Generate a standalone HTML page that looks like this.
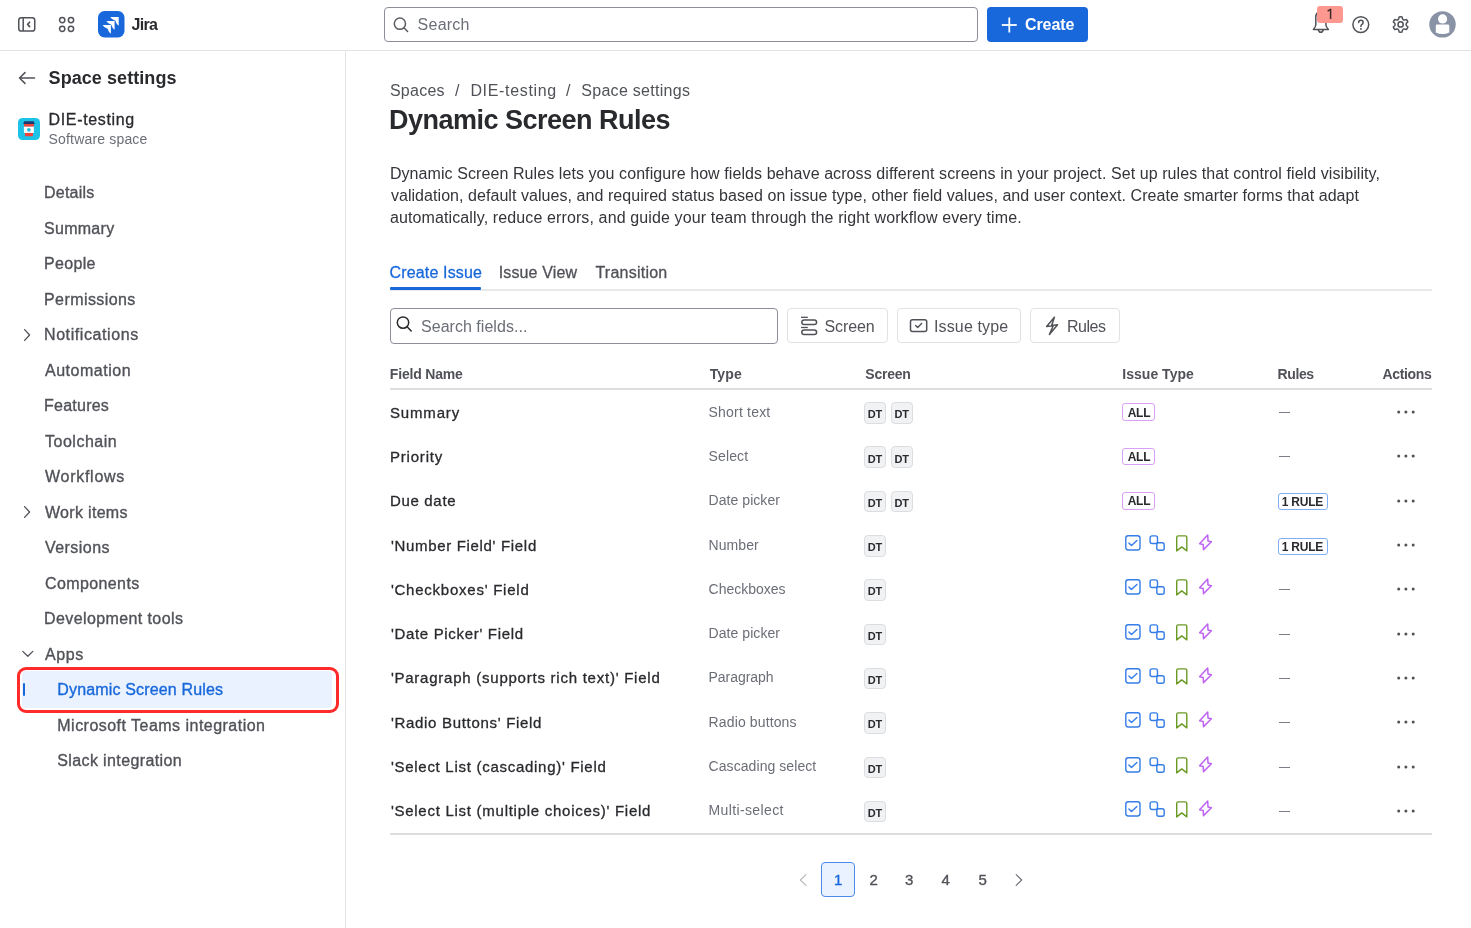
<!DOCTYPE html>
<html><head><meta charset="utf-8"><title>Dynamic Screen Rules - Space settings</title>
<style>
html,body{margin:0;padding:0;background:#fff;}
body{width:1471px;height:928px;position:relative;overflow:hidden;font-family:"Liberation Sans",sans-serif;}
.t{position:absolute;white-space:pre;font-family:"Liberation Sans",sans-serif;}
svg{display:block}
</style></head><body>
<div style="position:absolute;left:0;top:50px;width:1471px;height:1px;background:#E3E3E3"></div>
<svg style="position:absolute;left:16px;top:15px" width="22" height="20" viewBox="0 0 22 20">
<rect x="2.75" y="2.75" width="16" height="13.3" rx="2.6" fill="none" stroke="#505258" stroke-width="1.5"/>
<line x1="7.2" y1="2.75" x2="7.2" y2="16" stroke="#505258" stroke-width="1.5"/>
<path d="M13.6 7.2 L11.6 9.4 L13.6 11.6" fill="none" stroke="#505258" stroke-width="1.6" stroke-linecap="round" stroke-linejoin="round"/>
</svg>
<svg style="position:absolute;left:56px;top:15px" width="20" height="20" viewBox="0 0 20 20">
<g fill="none" stroke="#505258" stroke-width="1.5">
<circle cx="6.2" cy="5.1" r="2.65"/><circle cx="15" cy="5.1" r="2.65"/>
<circle cx="6.2" cy="13.8" r="2.65"/><circle cx="15" cy="13.8" r="2.65"/>
</g></svg>
<svg style="position:absolute;left:98px;top:11px" width="26.5" height="26.5" viewBox="0 0 26.5 26.5">
<rect x="0" y="0" width="26.5" height="26.5" rx="6.5" fill="#1868DB"/>
<g fill="#fff">
<path d="M12.2 6 L20.7 6 L20.7 14.7 Q18.6 13.8 17.4 9.7 Q13.6 8.5 12.2 6 Z"/>
<path d="M8.3 10 L16.6 10 L16.6 18.7 Q14.5 17.8 13.3 13.7 Q9.6 12.5 8.3 10 Z"/>
<path d="M4.5 14.1 L12.9 14.1 L12.9 22.8 Q10.8 21.9 9.6 17.8 Q5.8 16.6 4.5 14.1 Z"/>
</g></svg>
<div style="position:absolute;left:383.5px;top:7px;width:594.5px;height:35px;box-sizing:border-box;border:1px solid #8C8F97;border-radius:4px;background:#fff"></div>
<svg style="position:absolute;left:391px;top:15px" width="20" height="20" viewBox="0 0 20 20">
<circle cx="8.9" cy="8.7" r="5.6" fill="none" stroke="#5A5C62" stroke-width="1.5"/>
<line x1="12.9" y1="12.8" x2="16.6" y2="16.5" stroke="#5A5C62" stroke-width="1.5" stroke-linecap="round"/>
</svg>
<div style="position:absolute;left:987px;top:7px;width:101px;height:35px;border-radius:4px;background:#1868DB"></div>
<svg style="position:absolute;left:999px;top:15px" width="20" height="20" viewBox="0 0 20 20">
<line x1="10.3" y1="2.5" x2="10.3" y2="17.5" stroke="#fff" stroke-width="1.8"/>
<line x1="2.8" y1="10" x2="17.8" y2="10" stroke="#fff" stroke-width="1.8"/>
</svg>
<svg style="position:absolute;left:1310px;top:4px" width="22" height="32" viewBox="0 0 22 32">
<path d="M5.8 21 L5.8 13.5 Q5.8 7.5 10.9 7.5 Q15.9 7.5 15.9 13.5 L15.9 21 Q16.2 23 18.4 25.4 L3.4 25.4 Q5.5 23 5.8 21 Z" fill="none" stroke="#505258" stroke-width="1.5" stroke-linejoin="round"/>
<path d="M8.1 26 Q10.8 30.6 13.5 26" fill="none" stroke="#505258" stroke-width="1.5"/>
</svg>
<div style="position:absolute;left:1317px;top:6px;width:26px;height:17px;border-radius:3px;background:#FD9891"></div>
<svg style="position:absolute;left:1322px;top:6px" width="14" height="17" viewBox="0 0 14 17"><path d="M5.6 5.2 L8.6 3.3 L8.6 13" fill="none" stroke="#3B2B2B" stroke-width="1.5" stroke-linejoin="round"/></svg>
<svg style="position:absolute;left:1350px;top:14px" width="22" height="22" viewBox="0 0 22 22">
<circle cx="10.8" cy="10.6" r="7.9" fill="none" stroke="#505258" stroke-width="1.5"/>
<path d="M8.6 8.6 Q8.6 6.3 10.9 6.3 Q13.1 6.3 13.1 8.4 Q13.1 9.8 11.6 10.6 Q10.9 11 10.9 12.4" fill="none" stroke="#505258" stroke-width="1.5" stroke-linecap="round"/>
<circle cx="10.9" cy="14.9" r="0.95" fill="#505258"/>
</svg>
<svg style="position:absolute;left:1390px;top:14px" width="22" height="22" viewBox="0 0 22 22">
<path d="M12.07 2.89 A7.7 7.7 0 0 0 9.13 2.89 Q8.80 7.33 4.79 5.40 A7.7 7.7 0 0 0 3.32 7.94 Q7.00 10.45 3.32 12.96 A7.7 7.7 0 0 0 4.79 15.50 Q8.80 13.57 9.13 18.01 A7.7 7.7 0 0 0 12.07 18.01 Q12.40 13.57 16.41 15.50 A7.7 7.7 0 0 0 17.88 12.96 Q14.20 10.45 17.88 7.94 A7.7 7.7 0 0 0 16.41 5.40 Q12.40 7.33 12.07 2.89 Z" fill="none" stroke="#505258" stroke-width="1.5" stroke-linejoin="round"/>
<circle cx="10.6" cy="10.45" r="2.6" fill="none" stroke="#505258" stroke-width="1.5"/>
</svg>
<svg style="position:absolute;left:1429px;top:11px" width="27" height="27" viewBox="0 0 27 27">
<circle cx="13.5" cy="13.4" r="13.2" fill="#8993A5"/>
<circle cx="13.6" cy="7.9" r="4.6" fill="#fff"/>
<path d="M6.8 14.8 Q6.8 13.4 8.2 13.4 L18.9 13.4 Q20.3 13.4 20.3 14.8 L20.3 21.6 Q13.6 24.6 6.8 21.6 Z" fill="#fff"/>
</svg>
<div style="position:absolute;left:345px;top:51px;width:1px;height:877px;background:#E3E4E4"></div>
<svg style="position:absolute;left:17px;top:70px" width="20" height="16" viewBox="0 0 20 16">
<path d="M2.5 8 L17.5 8 M8 2.6 L2.5 8 L8 13.4" fill="none" stroke="#505258" stroke-width="1.5" stroke-linecap="round" stroke-linejoin="round"/>
</svg>
<svg style="position:absolute;left:18px;top:118px" width="22" height="22" viewBox="0 0 22 22">
<rect x="0" y="0" width="22" height="22" rx="4.5" fill="#1CC3E6"/>
<path d="M6.3 3.3 L15.6 3.3 L16.8 5.9 L5.1 5.9 Z" fill="#1D3A6E"/>
<rect x="6.1" y="6.0" width="9.8" height="2.7" fill="#F0443A"/>
<rect x="5.9" y="8.7" width="10" height="6.2" fill="#fff"/>
<circle cx="10.9" cy="11.8" r="1.9" fill="#1CC3E6"/>
<path d="M6.8 14.9 L15.1 14.9 L14.7 18.2 L7.2 18.2 Z" fill="#F0443A"/>
</svg>
<svg style="position:absolute;left:20px;top:326.6px" width="14" height="16" viewBox="0 0 14 16">
<path d="M4.6 2.6 L9.6 8 L4.6 13.4" fill="none" stroke="#505258" stroke-width="1.3" stroke-linecap="round" stroke-linejoin="round"/></svg>
<svg style="position:absolute;left:20px;top:504.1px" width="14" height="16" viewBox="0 0 14 16">
<path d="M4.6 2.6 L9.6 8 L4.6 13.4" fill="none" stroke="#505258" stroke-width="1.3" stroke-linecap="round" stroke-linejoin="round"/></svg>
<svg style="position:absolute;left:20px;top:646.1px" width="16" height="16" viewBox="0 0 16 16">
<path d="M2.8 5.4 L7.8 10.2 L12.8 5.4" fill="none" stroke="#505258" stroke-width="1.3" stroke-linecap="round" stroke-linejoin="round"/></svg>
<div style="position:absolute;left:21.5px;top:671px;width:310.5px;height:36.5px;border-radius:4px;background:#E9F2FE"></div>
<div style="position:absolute;left:22.5px;top:682.5px;width:2.3px;height:13px;border-radius:1.2px;background:#1868DB"></div>
<div style="position:absolute;left:17px;top:667px;width:321.5px;height:45.5px;box-sizing:border-box;border:3px solid #FF2A2A;border-radius:9px"></div>
<div style="position:absolute;left:390px;top:289px;width:1041.5px;height:2px;background:#E9E9E9"></div>
<div style="position:absolute;left:390px;top:287px;width:91px;height:3px;border-radius:1px;background:#1868DB"></div>
<div style="position:absolute;left:390px;top:308px;width:388px;height:36px;box-sizing:border-box;border:1px solid #8C8F97;border-radius:4px;background:#fff"></div>
<svg style="position:absolute;left:394px;top:314px" width="20" height="20" viewBox="0 0 20 20">
<circle cx="9" cy="8.6" r="5.7" fill="none" stroke="#292A2E" stroke-width="1.5"/>
<line x1="13.1" y1="12.7" x2="17.2" y2="16.9" stroke="#292A2E" stroke-width="1.5" stroke-linecap="round"/>
</svg>
<div style="position:absolute;left:787px;top:308px;width:101px;height:35px;box-sizing:border-box;border:1px solid #E1E2E5;border-radius:4px;background:#fff"></div>
<div style="position:absolute;left:896.5px;top:308px;width:124.0px;height:35px;box-sizing:border-box;border:1px solid #E1E2E5;border-radius:4px;background:#fff"></div>
<div style="position:absolute;left:1029.5px;top:308px;width:90.5px;height:35px;box-sizing:border-box;border:1px solid #E1E2E5;border-radius:4px;background:#fff"></div>
<svg style="position:absolute;left:799px;top:315px" width="20" height="22" viewBox="0 0 20 22">
<g fill="none" stroke="#505258" stroke-width="1.5">
<rect x="2.8" y="4.9" width="14.8" height="4.6" rx="2.3"/>
<rect x="2.8" y="15" width="14.8" height="4.6" rx="2.3"/>
</g>
<line x1="2" y1="2.3" x2="8.8" y2="2.3" stroke="#505258" stroke-width="1.3"/>
<line x1="2" y1="12.5" x2="8.8" y2="12.5" stroke="#505258" stroke-width="1.3"/>
</svg>
<svg style="position:absolute;left:908px;top:316px" width="22" height="20" viewBox="0 0 22 20">
<rect x="2.5" y="3.7" width="16.2" height="11.8" rx="2" fill="none" stroke="#505258" stroke-width="1.5"/>
<path d="M7.6 9.6 L9.7 11.6 L13.6 7.6" fill="none" stroke="#505258" stroke-width="1.4" stroke-linecap="round" stroke-linejoin="round"/>
</svg>
<svg style="position:absolute;left:1042px;top:315px" width="20" height="22" viewBox="0 0 20 22">
<path d="M12.4 2.3 L4.6 11.5 L11.2 10.8 L7.4 19.6 L15.6 9.8 L9.6 10.4 Z" fill="none" stroke="#505258" stroke-width="1.5" stroke-linejoin="round"/>
</svg>
<div style="position:absolute;left:390px;top:388px;width:1041.5px;height:2px;background:#DDDDDD"></div>
<div style="position:absolute;left:390px;top:833px;width:1041.5px;height:2px;background:#DDDDDD"></div>
<div style="position:absolute;left:864.3px;top:402.1px;width:22px;height:21.5px;box-sizing:border-box;border:1px solid #DCDDE0;border-radius:4px;background:#F1F2F4"></div>
<div style="position:absolute;left:891.2px;top:402.1px;width:22px;height:21.5px;box-sizing:border-box;border:1px solid #DCDDE0;border-radius:4px;background:#F1F2F4"></div>
<div style="position:absolute;left:1122.4px;top:403.2px;width:32.2px;height:17.7px;box-sizing:border-box;border:1px solid #D8A0F7;border-radius:3px;background:#fff"></div>
<div style="position:absolute;left:1278.5px;top:412px;width:11px;height:1px;background:#7A7D85"></div>
<svg style="position:absolute;left:1394px;top:409.1px" width="24" height="6" viewBox="0 0 24 6">
<circle cx="4.7" cy="3" r="1.5" fill="#505258"/><circle cx="11.9" cy="3" r="1.5" fill="#505258"/><circle cx="19.2" cy="3" r="1.5" fill="#505258"/></svg>
<div style="position:absolute;left:864.3px;top:446.4px;width:22px;height:21.5px;box-sizing:border-box;border:1px solid #DCDDE0;border-radius:4px;background:#F1F2F4"></div>
<div style="position:absolute;left:891.2px;top:446.4px;width:22px;height:21.5px;box-sizing:border-box;border:1px solid #DCDDE0;border-radius:4px;background:#F1F2F4"></div>
<div style="position:absolute;left:1122.4px;top:447.6px;width:32.2px;height:17.7px;box-sizing:border-box;border:1px solid #D8A0F7;border-radius:3px;background:#fff"></div>
<div style="position:absolute;left:1278.5px;top:456px;width:11px;height:1px;background:#7A7D85"></div>
<svg style="position:absolute;left:1394px;top:453.4px" width="24" height="6" viewBox="0 0 24 6">
<circle cx="4.7" cy="3" r="1.5" fill="#505258"/><circle cx="11.9" cy="3" r="1.5" fill="#505258"/><circle cx="19.2" cy="3" r="1.5" fill="#505258"/></svg>
<div style="position:absolute;left:864.3px;top:490.8px;width:22px;height:21.5px;box-sizing:border-box;border:1px solid #DCDDE0;border-radius:4px;background:#F1F2F4"></div>
<div style="position:absolute;left:891.2px;top:490.8px;width:22px;height:21.5px;box-sizing:border-box;border:1px solid #DCDDE0;border-radius:4px;background:#F1F2F4"></div>
<div style="position:absolute;left:1122.4px;top:491.9px;width:32.2px;height:17.7px;box-sizing:border-box;border:1px solid #D8A0F7;border-radius:3px;background:#fff"></div>
<div style="position:absolute;left:1277.9px;top:493.2px;width:50.5px;height:17.2px;box-sizing:border-box;border:1px solid #7EAEF5;border-radius:3px;background:#fff"></div>
<svg style="position:absolute;left:1394px;top:497.8px" width="24" height="6" viewBox="0 0 24 6">
<circle cx="4.7" cy="3" r="1.5" fill="#505258"/><circle cx="11.9" cy="3" r="1.5" fill="#505258"/><circle cx="19.2" cy="3" r="1.5" fill="#505258"/></svg>
<div style="position:absolute;left:864.3px;top:535.0px;width:22px;height:21.5px;box-sizing:border-box;border:1px solid #DCDDE0;border-radius:4px;background:#F1F2F4"></div>
<svg style="position:absolute;left:1120px;top:531.0px" width="100" height="24" viewBox="0 0 100 24">
<rect x="5.8" y="4.8" width="14.2" height="14.2" rx="2.4" fill="none" stroke="#357DE8" stroke-width="1.4"/>
<path d="M8.9 12 L11.5 14.6 L16.9 9.4" fill="none" stroke="#357DE8" stroke-width="1.4" stroke-linecap="round" stroke-linejoin="round"/>
<rect x="30.1" y="4.9" width="7.4" height="7.6" rx="2" fill="none" stroke="#357DE8" stroke-width="1.4"/>
<rect x="36.8" y="11.7" width="7.4" height="7.6" rx="2" fill="none" stroke="#357DE8" stroke-width="1.4"/>
<path d="M56.7 19.9 L56.7 6.4 Q56.7 4.9 58.2 4.9 L65.3 4.9 Q66.8 4.9 66.8 6.4 L66.8 19.9 L61.75 15.9 Z" fill="none" stroke="#6A9A23" stroke-width="1.4" stroke-linejoin="round"/>
<path d="M87.7 4 L88 10 L91.4 10.8 L83.5 18.6 L83.2 13.6 L79.6 12.7 Z" fill="none" stroke="#BF63F3" stroke-width="1.5" stroke-linejoin="round"/>
</svg>
<div style="position:absolute;left:1277.9px;top:537.5px;width:50.5px;height:17.2px;box-sizing:border-box;border:1px solid #7EAEF5;border-radius:3px;background:#fff"></div>
<svg style="position:absolute;left:1394px;top:542.0px" width="24" height="6" viewBox="0 0 24 6">
<circle cx="4.7" cy="3" r="1.5" fill="#505258"/><circle cx="11.9" cy="3" r="1.5" fill="#505258"/><circle cx="19.2" cy="3" r="1.5" fill="#505258"/></svg>
<div style="position:absolute;left:864.3px;top:579.3px;width:22px;height:21.5px;box-sizing:border-box;border:1px solid #DCDDE0;border-radius:4px;background:#F1F2F4"></div>
<svg style="position:absolute;left:1120px;top:575.3px" width="100" height="24" viewBox="0 0 100 24">
<rect x="5.8" y="4.8" width="14.2" height="14.2" rx="2.4" fill="none" stroke="#357DE8" stroke-width="1.4"/>
<path d="M8.9 12 L11.5 14.6 L16.9 9.4" fill="none" stroke="#357DE8" stroke-width="1.4" stroke-linecap="round" stroke-linejoin="round"/>
<rect x="30.1" y="4.9" width="7.4" height="7.6" rx="2" fill="none" stroke="#357DE8" stroke-width="1.4"/>
<rect x="36.8" y="11.7" width="7.4" height="7.6" rx="2" fill="none" stroke="#357DE8" stroke-width="1.4"/>
<path d="M56.7 19.9 L56.7 6.4 Q56.7 4.9 58.2 4.9 L65.3 4.9 Q66.8 4.9 66.8 6.4 L66.8 19.9 L61.75 15.9 Z" fill="none" stroke="#6A9A23" stroke-width="1.4" stroke-linejoin="round"/>
<path d="M87.7 4 L88 10 L91.4 10.8 L83.5 18.6 L83.2 13.6 L79.6 12.7 Z" fill="none" stroke="#BF63F3" stroke-width="1.5" stroke-linejoin="round"/>
</svg>
<div style="position:absolute;left:1278.5px;top:589px;width:11px;height:1px;background:#7A7D85"></div>
<svg style="position:absolute;left:1394px;top:586.3px" width="24" height="6" viewBox="0 0 24 6">
<circle cx="4.7" cy="3" r="1.5" fill="#505258"/><circle cx="11.9" cy="3" r="1.5" fill="#505258"/><circle cx="19.2" cy="3" r="1.5" fill="#505258"/></svg>
<div style="position:absolute;left:864.3px;top:623.6px;width:22px;height:21.5px;box-sizing:border-box;border:1px solid #DCDDE0;border-radius:4px;background:#F1F2F4"></div>
<svg style="position:absolute;left:1120px;top:619.6px" width="100" height="24" viewBox="0 0 100 24">
<rect x="5.8" y="4.8" width="14.2" height="14.2" rx="2.4" fill="none" stroke="#357DE8" stroke-width="1.4"/>
<path d="M8.9 12 L11.5 14.6 L16.9 9.4" fill="none" stroke="#357DE8" stroke-width="1.4" stroke-linecap="round" stroke-linejoin="round"/>
<rect x="30.1" y="4.9" width="7.4" height="7.6" rx="2" fill="none" stroke="#357DE8" stroke-width="1.4"/>
<rect x="36.8" y="11.7" width="7.4" height="7.6" rx="2" fill="none" stroke="#357DE8" stroke-width="1.4"/>
<path d="M56.7 19.9 L56.7 6.4 Q56.7 4.9 58.2 4.9 L65.3 4.9 Q66.8 4.9 66.8 6.4 L66.8 19.9 L61.75 15.9 Z" fill="none" stroke="#6A9A23" stroke-width="1.4" stroke-linejoin="round"/>
<path d="M87.7 4 L88 10 L91.4 10.8 L83.5 18.6 L83.2 13.6 L79.6 12.7 Z" fill="none" stroke="#BF63F3" stroke-width="1.5" stroke-linejoin="round"/>
</svg>
<div style="position:absolute;left:1278.5px;top:634px;width:11px;height:1px;background:#7A7D85"></div>
<svg style="position:absolute;left:1394px;top:630.6px" width="24" height="6" viewBox="0 0 24 6">
<circle cx="4.7" cy="3" r="1.5" fill="#505258"/><circle cx="11.9" cy="3" r="1.5" fill="#505258"/><circle cx="19.2" cy="3" r="1.5" fill="#505258"/></svg>
<div style="position:absolute;left:864.3px;top:667.9px;width:22px;height:21.5px;box-sizing:border-box;border:1px solid #DCDDE0;border-radius:4px;background:#F1F2F4"></div>
<svg style="position:absolute;left:1120px;top:663.9px" width="100" height="24" viewBox="0 0 100 24">
<rect x="5.8" y="4.8" width="14.2" height="14.2" rx="2.4" fill="none" stroke="#357DE8" stroke-width="1.4"/>
<path d="M8.9 12 L11.5 14.6 L16.9 9.4" fill="none" stroke="#357DE8" stroke-width="1.4" stroke-linecap="round" stroke-linejoin="round"/>
<rect x="30.1" y="4.9" width="7.4" height="7.6" rx="2" fill="none" stroke="#357DE8" stroke-width="1.4"/>
<rect x="36.8" y="11.7" width="7.4" height="7.6" rx="2" fill="none" stroke="#357DE8" stroke-width="1.4"/>
<path d="M56.7 19.9 L56.7 6.4 Q56.7 4.9 58.2 4.9 L65.3 4.9 Q66.8 4.9 66.8 6.4 L66.8 19.9 L61.75 15.9 Z" fill="none" stroke="#6A9A23" stroke-width="1.4" stroke-linejoin="round"/>
<path d="M87.7 4 L88 10 L91.4 10.8 L83.5 18.6 L83.2 13.6 L79.6 12.7 Z" fill="none" stroke="#BF63F3" stroke-width="1.5" stroke-linejoin="round"/>
</svg>
<div style="position:absolute;left:1278.5px;top:678px;width:11px;height:1px;background:#7A7D85"></div>
<svg style="position:absolute;left:1394px;top:674.9px" width="24" height="6" viewBox="0 0 24 6">
<circle cx="4.7" cy="3" r="1.5" fill="#505258"/><circle cx="11.9" cy="3" r="1.5" fill="#505258"/><circle cx="19.2" cy="3" r="1.5" fill="#505258"/></svg>
<div style="position:absolute;left:864.3px;top:712.2px;width:22px;height:21.5px;box-sizing:border-box;border:1px solid #DCDDE0;border-radius:4px;background:#F1F2F4"></div>
<svg style="position:absolute;left:1120px;top:708.2px" width="100" height="24" viewBox="0 0 100 24">
<rect x="5.8" y="4.8" width="14.2" height="14.2" rx="2.4" fill="none" stroke="#357DE8" stroke-width="1.4"/>
<path d="M8.9 12 L11.5 14.6 L16.9 9.4" fill="none" stroke="#357DE8" stroke-width="1.4" stroke-linecap="round" stroke-linejoin="round"/>
<rect x="30.1" y="4.9" width="7.4" height="7.6" rx="2" fill="none" stroke="#357DE8" stroke-width="1.4"/>
<rect x="36.8" y="11.7" width="7.4" height="7.6" rx="2" fill="none" stroke="#357DE8" stroke-width="1.4"/>
<path d="M56.7 19.9 L56.7 6.4 Q56.7 4.9 58.2 4.9 L65.3 4.9 Q66.8 4.9 66.8 6.4 L66.8 19.9 L61.75 15.9 Z" fill="none" stroke="#6A9A23" stroke-width="1.4" stroke-linejoin="round"/>
<path d="M87.7 4 L88 10 L91.4 10.8 L83.5 18.6 L83.2 13.6 L79.6 12.7 Z" fill="none" stroke="#BF63F3" stroke-width="1.5" stroke-linejoin="round"/>
</svg>
<div style="position:absolute;left:1278.5px;top:722px;width:11px;height:1px;background:#7A7D85"></div>
<svg style="position:absolute;left:1394px;top:719.2px" width="24" height="6" viewBox="0 0 24 6">
<circle cx="4.7" cy="3" r="1.5" fill="#505258"/><circle cx="11.9" cy="3" r="1.5" fill="#505258"/><circle cx="19.2" cy="3" r="1.5" fill="#505258"/></svg>
<div style="position:absolute;left:864.3px;top:756.5px;width:22px;height:21.5px;box-sizing:border-box;border:1px solid #DCDDE0;border-radius:4px;background:#F1F2F4"></div>
<svg style="position:absolute;left:1120px;top:752.5px" width="100" height="24" viewBox="0 0 100 24">
<rect x="5.8" y="4.8" width="14.2" height="14.2" rx="2.4" fill="none" stroke="#357DE8" stroke-width="1.4"/>
<path d="M8.9 12 L11.5 14.6 L16.9 9.4" fill="none" stroke="#357DE8" stroke-width="1.4" stroke-linecap="round" stroke-linejoin="round"/>
<rect x="30.1" y="4.9" width="7.4" height="7.6" rx="2" fill="none" stroke="#357DE8" stroke-width="1.4"/>
<rect x="36.8" y="11.7" width="7.4" height="7.6" rx="2" fill="none" stroke="#357DE8" stroke-width="1.4"/>
<path d="M56.7 19.9 L56.7 6.4 Q56.7 4.9 58.2 4.9 L65.3 4.9 Q66.8 4.9 66.8 6.4 L66.8 19.9 L61.75 15.9 Z" fill="none" stroke="#6A9A23" stroke-width="1.4" stroke-linejoin="round"/>
<path d="M87.7 4 L88 10 L91.4 10.8 L83.5 18.6 L83.2 13.6 L79.6 12.7 Z" fill="none" stroke="#BF63F3" stroke-width="1.5" stroke-linejoin="round"/>
</svg>
<div style="position:absolute;left:1278.5px;top:767px;width:11px;height:1px;background:#7A7D85"></div>
<svg style="position:absolute;left:1394px;top:763.5px" width="24" height="6" viewBox="0 0 24 6">
<circle cx="4.7" cy="3" r="1.5" fill="#505258"/><circle cx="11.9" cy="3" r="1.5" fill="#505258"/><circle cx="19.2" cy="3" r="1.5" fill="#505258"/></svg>
<div style="position:absolute;left:864.3px;top:800.8px;width:22px;height:21.5px;box-sizing:border-box;border:1px solid #DCDDE0;border-radius:4px;background:#F1F2F4"></div>
<svg style="position:absolute;left:1120px;top:796.8px" width="100" height="24" viewBox="0 0 100 24">
<rect x="5.8" y="4.8" width="14.2" height="14.2" rx="2.4" fill="none" stroke="#357DE8" stroke-width="1.4"/>
<path d="M8.9 12 L11.5 14.6 L16.9 9.4" fill="none" stroke="#357DE8" stroke-width="1.4" stroke-linecap="round" stroke-linejoin="round"/>
<rect x="30.1" y="4.9" width="7.4" height="7.6" rx="2" fill="none" stroke="#357DE8" stroke-width="1.4"/>
<rect x="36.8" y="11.7" width="7.4" height="7.6" rx="2" fill="none" stroke="#357DE8" stroke-width="1.4"/>
<path d="M56.7 19.9 L56.7 6.4 Q56.7 4.9 58.2 4.9 L65.3 4.9 Q66.8 4.9 66.8 6.4 L66.8 19.9 L61.75 15.9 Z" fill="none" stroke="#6A9A23" stroke-width="1.4" stroke-linejoin="round"/>
<path d="M87.7 4 L88 10 L91.4 10.8 L83.5 18.6 L83.2 13.6 L79.6 12.7 Z" fill="none" stroke="#BF63F3" stroke-width="1.5" stroke-linejoin="round"/>
</svg>
<div style="position:absolute;left:1278.5px;top:811px;width:11px;height:1px;background:#7A7D85"></div>
<svg style="position:absolute;left:1394px;top:807.8px" width="24" height="6" viewBox="0 0 24 6">
<circle cx="4.7" cy="3" r="1.5" fill="#505258"/><circle cx="11.9" cy="3" r="1.5" fill="#505258"/><circle cx="19.2" cy="3" r="1.5" fill="#505258"/></svg>
<svg style="position:absolute;left:796px;top:872px" width="14" height="16" viewBox="0 0 14 16">
<path d="M9.9 2.6 L4.4 8 L9.9 13.4" fill="none" stroke="#B7B9BE" stroke-width="1.1" stroke-linecap="round" stroke-linejoin="round"/></svg>
<div style="position:absolute;left:821.3px;top:862.3px;width:34px;height:34.3px;box-sizing:border-box;border:1.5px solid #4C8AEB;border-radius:4px;background:#E9F2FE"></div>
<svg style="position:absolute;left:1012px;top:872px" width="14" height="16" viewBox="0 0 14 16">
<path d="M4.2 2.6 L9.7 8 L4.2 13.4" fill="none" stroke="#6B6E76" stroke-width="1.1" stroke-linecap="round" stroke-linejoin="round"/></svg>
<div style="position:absolute;left:0;top:0;width:1471px;height:928px;will-change:transform">
<span class="t" style="left:131.60px;top:17px;font-size:16px;line-height:16px;font-weight:700;color:#292A2E;letter-spacing:-0.7px;">Jira</span>
<span class="t" style="left:417.60px;top:17px;font-size:16px;line-height:16px;font-weight:400;color:#6B6E76;letter-spacing:0.24px;">Search</span>
<span class="t" style="left:1025.00px;top:17px;font-size:16px;line-height:16px;font-weight:700;color:#FFFFFF;letter-spacing:-0.1px;">Create</span>
<span class="t" style="left:48.60px;top:69px;font-size:18px;line-height:18px;font-weight:700;color:#292A2E;letter-spacing:0.062px;">Space settings</span>
<span class="t" style="left:48.60px;top:112px;font-size:16px;line-height:16px;font-weight:400;color:#292A2E;letter-spacing:0.64px;-webkit-text-stroke:0.3px #292A2E;">DIE-testing</span>
<span class="t" style="left:48.60px;top:132px;font-size:14px;line-height:14px;font-weight:400;color:#6B6E76;letter-spacing:0.169px;">Software space</span>
<span class="t" style="left:44.00px;top:185px;font-size:16px;line-height:16px;font-weight:400;color:#505258;letter-spacing:0.217px;-webkit-text-stroke:0.35px #505258;">Details</span>
<span class="t" style="left:44.00px;top:221px;font-size:16px;line-height:16px;font-weight:400;color:#505258;letter-spacing:0.283px;-webkit-text-stroke:0.35px #505258;">Summary</span>
<span class="t" style="left:44.00px;top:256px;font-size:16px;line-height:16px;font-weight:400;color:#505258;letter-spacing:0.34px;-webkit-text-stroke:0.35px #505258;">People</span>
<span class="t" style="left:44.00px;top:292px;font-size:16px;line-height:16px;font-weight:400;color:#505258;letter-spacing:0.42px;-webkit-text-stroke:0.35px #505258;">Permissions</span>
<span class="t" style="left:44.00px;top:327px;font-size:16px;line-height:16px;font-weight:400;color:#505258;letter-spacing:0.583px;-webkit-text-stroke:0.35px #505258;">Notifications</span>
<span class="t" style="left:45.00px;top:363px;font-size:16px;line-height:16px;font-weight:400;color:#505258;letter-spacing:0.522px;-webkit-text-stroke:0.35px #505258;">Automation</span>
<span class="t" style="left:44.00px;top:398px;font-size:16px;line-height:16px;font-weight:400;color:#505258;letter-spacing:0.243px;-webkit-text-stroke:0.35px #505258;">Features</span>
<span class="t" style="left:45.00px;top:434px;font-size:16px;line-height:16px;font-weight:400;color:#505258;letter-spacing:0.512px;-webkit-text-stroke:0.35px #505258;">Toolchain</span>
<span class="t" style="left:45.00px;top:469px;font-size:16px;line-height:16px;font-weight:400;color:#505258;letter-spacing:0.725px;-webkit-text-stroke:0.35px #505258;">Workflows</span>
<span class="t" style="left:45.00px;top:505px;font-size:16px;line-height:16px;font-weight:400;color:#505258;letter-spacing:0.311px;-webkit-text-stroke:0.35px #505258;">Work items</span>
<span class="t" style="left:45.00px;top:540px;font-size:16px;line-height:16px;font-weight:400;color:#505258;letter-spacing:0.443px;-webkit-text-stroke:0.35px #505258;">Versions</span>
<span class="t" style="left:45.00px;top:576px;font-size:16px;line-height:16px;font-weight:400;color:#505258;letter-spacing:0.389px;-webkit-text-stroke:0.35px #505258;">Components</span>
<span class="t" style="left:44.00px;top:611px;font-size:16px;line-height:16px;font-weight:400;color:#505258;letter-spacing:0.4px;-webkit-text-stroke:0.35px #505258;">Development tools</span>
<span class="t" style="left:45.00px;top:647px;font-size:16px;line-height:16px;font-weight:400;color:#505258;letter-spacing:0.567px;-webkit-text-stroke:0.35px #505258;">Apps</span>
<span class="t" style="left:57.30px;top:682px;font-size:16px;line-height:16px;font-weight:400;color:#1868DB;letter-spacing:0.158px;-webkit-text-stroke:0.35px #1868DB;">Dynamic Screen Rules</span>
<span class="t" style="left:57.30px;top:718px;font-size:16px;line-height:16px;font-weight:400;color:#505258;letter-spacing:0.473px;-webkit-text-stroke:0.35px #505258;">Microsoft Teams integration</span>
<span class="t" style="left:57.30px;top:753px;font-size:16px;line-height:16px;font-weight:400;color:#505258;letter-spacing:0.375px;-webkit-text-stroke:0.35px #505258;">Slack integration</span>
<span class="t" style="left:389.90px;top:83px;font-size:16px;line-height:16px;font-weight:400;color:#505258;letter-spacing:0.26px;">Spaces</span>
<span class="t" style="left:455.00px;top:83px;font-size:16px;line-height:16px;font-weight:400;color:#505258;">/</span>
<span class="t" style="left:470.40px;top:83px;font-size:16px;line-height:16px;font-weight:400;color:#505258;letter-spacing:0.67px;">DIE-testing</span>
<span class="t" style="left:566.00px;top:83px;font-size:16px;line-height:16px;font-weight:400;color:#505258;">/</span>
<span class="t" style="left:581.30px;top:83px;font-size:16px;line-height:16px;font-weight:400;color:#505258;letter-spacing:0.285px;">Space settings</span>
<span class="t" style="left:388.90px;top:107px;font-size:27px;line-height:27px;font-weight:700;color:#292A2E;letter-spacing:-0.505px;">Dynamic Screen Rules</span>
<span class="t" style="left:389.90px;top:166px;font-size:16px;line-height:16px;font-weight:400;color:#34353A;letter-spacing:0.081px;">Dynamic Screen Rules lets you configure how fields behave across different screens in your project. Set up rules that control field visibility,</span>
<span class="t" style="left:390.90px;top:188px;font-size:16px;line-height:16px;font-weight:400;color:#34353A;letter-spacing:0.055px;">validation, default values, and required status based on issue type, other field values, and user context. Create smarter forms that adapt</span>
<span class="t" style="left:389.90px;top:210px;font-size:16px;line-height:16px;font-weight:400;color:#34353A;letter-spacing:0.12px;">automatically, reduce errors, and guide your team through the right workflow every time.</span>
<span class="t" style="left:389.50px;top:265px;font-size:16px;line-height:16px;font-weight:400;color:#1868DB;letter-spacing:0.155px;-webkit-text-stroke:0.3px #1868DB;">Create Issue</span>
<span class="t" style="left:498.70px;top:265px;font-size:16px;line-height:16px;font-weight:400;color:#505258;letter-spacing:0.144px;-webkit-text-stroke:0.3px #505258;">Issue View</span>
<span class="t" style="left:595.40px;top:265px;font-size:16px;line-height:16px;font-weight:400;color:#505258;letter-spacing:0.244px;-webkit-text-stroke:0.3px #505258;">Transition</span>
<span class="t" style="left:421.00px;top:319px;font-size:16px;line-height:16px;font-weight:400;color:#6B6E76;letter-spacing:0.033px;">Search fields...</span>
<span class="t" style="left:824.40px;top:319px;font-size:16px;line-height:16px;font-weight:400;color:#505258;letter-spacing:-0.08px;">Screen</span>
<span class="t" style="left:934.00px;top:319px;font-size:16px;line-height:16px;font-weight:400;color:#505258;letter-spacing:0.133px;">Issue type</span>
<span class="t" style="left:1067.00px;top:319px;font-size:16px;line-height:16px;font-weight:400;color:#505258;letter-spacing:-0.5px;">Rules</span>
<span class="t" style="left:389.80px;top:367px;font-size:14px;line-height:14px;font-weight:700;color:#505258;letter-spacing:-0.178px;">Field Name</span>
<span class="t" style="left:709.70px;top:367px;font-size:14px;line-height:14px;font-weight:700;color:#505258;letter-spacing:0.133px;">Type</span>
<span class="t" style="left:865.30px;top:367px;font-size:14px;line-height:14px;font-weight:700;color:#505258;letter-spacing:-0.24px;">Screen</span>
<span class="t" style="left:1122.30px;top:367px;font-size:14px;line-height:14px;font-weight:700;color:#505258;letter-spacing:0.022px;">Issue Type</span>
<span class="t" style="left:1277.50px;top:367px;font-size:14px;line-height:14px;font-weight:700;color:#505258;letter-spacing:-0.375px;">Rules</span>
<span class="t" style="left:1382.50px;top:367px;font-size:14px;line-height:14px;font-weight:700;color:#505258;letter-spacing:-0.333px;">Actions</span>
<span class="t" style="left:389.90px;top:405px;font-size:15px;line-height:15px;font-weight:400;color:#292A2E;letter-spacing:0.85px;-webkit-text-stroke:0.3px #292A2E;">Summary</span>
<span class="t" style="left:708.60px;top:405px;font-size:14px;line-height:14px;font-weight:400;color:#6B6E76;letter-spacing:0.189px;">Short text</span>
<span class="t" style="left:867.70px;top:409px;font-size:11px;line-height:11px;font-weight:700;color:#292A2E;letter-spacing:-0.2px;">DT</span>
<span class="t" style="left:894.60px;top:409px;font-size:11px;line-height:11px;font-weight:700;color:#292A2E;letter-spacing:-0.2px;">DT</span>
<span class="t" style="left:1127.70px;top:407px;font-size:12px;line-height:12px;font-weight:700;color:#292A2E;letter-spacing:-0.25px;">ALL</span>
<span class="t" style="left:389.90px;top:449px;font-size:15px;line-height:15px;font-weight:400;color:#292A2E;letter-spacing:0.814px;-webkit-text-stroke:0.3px #292A2E;">Priority</span>
<span class="t" style="left:708.60px;top:449px;font-size:14px;line-height:14px;font-weight:400;color:#6B6E76;letter-spacing:0.12px;">Select</span>
<span class="t" style="left:867.70px;top:454px;font-size:11px;line-height:11px;font-weight:700;color:#292A2E;letter-spacing:-0.2px;">DT</span>
<span class="t" style="left:894.60px;top:454px;font-size:11px;line-height:11px;font-weight:700;color:#292A2E;letter-spacing:-0.2px;">DT</span>
<span class="t" style="left:1127.70px;top:451px;font-size:12px;line-height:12px;font-weight:700;color:#292A2E;letter-spacing:-0.25px;">ALL</span>
<span class="t" style="left:389.90px;top:493px;font-size:15px;line-height:15px;font-weight:400;color:#292A2E;letter-spacing:0.686px;-webkit-text-stroke:0.3px #292A2E;">Due date</span>
<span class="t" style="left:708.60px;top:493px;font-size:14px;line-height:14px;font-weight:400;color:#6B6E76;letter-spacing:0.05px;">Date picker</span>
<span class="t" style="left:867.70px;top:498px;font-size:11px;line-height:11px;font-weight:700;color:#292A2E;letter-spacing:-0.2px;">DT</span>
<span class="t" style="left:894.60px;top:498px;font-size:11px;line-height:11px;font-weight:700;color:#292A2E;letter-spacing:-0.2px;">DT</span>
<span class="t" style="left:1127.70px;top:495px;font-size:12px;line-height:12px;font-weight:700;color:#292A2E;letter-spacing:-0.25px;">ALL</span>
<span class="t" style="left:1281.70px;top:496px;font-size:12px;line-height:12px;font-weight:700;color:#292A2E;letter-spacing:-0.22px;">1 RULE</span>
<span class="t" style="left:390.90px;top:538px;font-size:15px;line-height:15px;font-weight:400;color:#292A2E;letter-spacing:0.679px;-webkit-text-stroke:0.3px #292A2E;">'Number Field' Field</span>
<span class="t" style="left:708.60px;top:538px;font-size:14px;line-height:14px;font-weight:400;color:#6B6E76;letter-spacing:0.06px;">Number</span>
<span class="t" style="left:867.70px;top:542px;font-size:11px;line-height:11px;font-weight:700;color:#292A2E;letter-spacing:-0.2px;">DT</span>
<span class="t" style="left:1281.70px;top:541px;font-size:12px;line-height:12px;font-weight:700;color:#292A2E;letter-spacing:-0.22px;">1 RULE</span>
<span class="t" style="left:390.90px;top:582px;font-size:15px;line-height:15px;font-weight:400;color:#292A2E;letter-spacing:0.759px;-webkit-text-stroke:0.3px #292A2E;">'Checkboxes' Field</span>
<span class="t" style="left:708.60px;top:582px;font-size:14px;line-height:14px;font-weight:400;color:#6B6E76;letter-spacing:-0.022px;">Checkboxes</span>
<span class="t" style="left:867.70px;top:586px;font-size:11px;line-height:11px;font-weight:700;color:#292A2E;letter-spacing:-0.2px;">DT</span>
<span class="t" style="left:390.90px;top:626px;font-size:15px;line-height:15px;font-weight:400;color:#292A2E;letter-spacing:0.678px;-webkit-text-stroke:0.3px #292A2E;">'Date Picker' Field</span>
<span class="t" style="left:708.60px;top:626px;font-size:14px;line-height:14px;font-weight:400;color:#6B6E76;letter-spacing:0.06px;">Date picker</span>
<span class="t" style="left:867.70px;top:631px;font-size:11px;line-height:11px;font-weight:700;color:#292A2E;letter-spacing:-0.2px;">DT</span>
<span class="t" style="left:390.90px;top:670px;font-size:15px;line-height:15px;font-weight:400;color:#292A2E;letter-spacing:0.757px;-webkit-text-stroke:0.3px #292A2E;">'Paragraph (supports rich text)' Field</span>
<span class="t" style="left:708.60px;top:670px;font-size:14px;line-height:14px;font-weight:400;color:#6B6E76;letter-spacing:-0.062px;">Paragraph</span>
<span class="t" style="left:867.70px;top:675px;font-size:11px;line-height:11px;font-weight:700;color:#292A2E;letter-spacing:-0.2px;">DT</span>
<span class="t" style="left:390.90px;top:715px;font-size:15px;line-height:15px;font-weight:400;color:#292A2E;letter-spacing:0.695px;-webkit-text-stroke:0.3px #292A2E;">'Radio Buttons' Field</span>
<span class="t" style="left:708.60px;top:715px;font-size:14px;line-height:14px;font-weight:400;color:#6B6E76;letter-spacing:0.125px;">Radio buttons</span>
<span class="t" style="left:867.70px;top:719px;font-size:11px;line-height:11px;font-weight:700;color:#292A2E;letter-spacing:-0.2px;">DT</span>
<span class="t" style="left:390.90px;top:759px;font-size:15px;line-height:15px;font-weight:400;color:#292A2E;letter-spacing:0.72px;-webkit-text-stroke:0.3px #292A2E;">'Select List (cascading)' Field</span>
<span class="t" style="left:708.60px;top:759px;font-size:14px;line-height:14px;font-weight:400;color:#6B6E76;letter-spacing:0.067px;">Cascading select</span>
<span class="t" style="left:867.70px;top:764px;font-size:11px;line-height:11px;font-weight:700;color:#292A2E;letter-spacing:-0.2px;">DT</span>
<span class="t" style="left:390.90px;top:803px;font-size:15px;line-height:15px;font-weight:400;color:#292A2E;letter-spacing:0.73px;-webkit-text-stroke:0.3px #292A2E;">'Select List (multiple choices)' Field</span>
<span class="t" style="left:708.60px;top:803px;font-size:14px;line-height:14px;font-weight:400;color:#6B6E76;letter-spacing:0.364px;">Multi-select</span>
<span class="t" style="left:867.70px;top:808px;font-size:11px;line-height:11px;font-weight:700;color:#292A2E;letter-spacing:-0.2px;">DT</span>
<span class="t" style="left:833.90px;top:872px;font-size:15px;line-height:15px;font-weight:400;color:#1868DB;-webkit-text-stroke:0.35px #1868DB;">1</span>
<span class="t" style="left:869.60px;top:872px;font-size:15px;line-height:15px;font-weight:400;color:#505258;-webkit-text-stroke:0.35px #505258;">2</span>
<span class="t" style="left:905.00px;top:872px;font-size:15px;line-height:15px;font-weight:400;color:#505258;-webkit-text-stroke:0.35px #505258;">3</span>
<span class="t" style="left:941.40px;top:872px;font-size:15px;line-height:15px;font-weight:400;color:#505258;-webkit-text-stroke:0.35px #505258;">4</span>
<span class="t" style="left:978.40px;top:872px;font-size:15px;line-height:15px;font-weight:400;color:#505258;-webkit-text-stroke:0.35px #505258;">5</span>
</div>
</body></html>
